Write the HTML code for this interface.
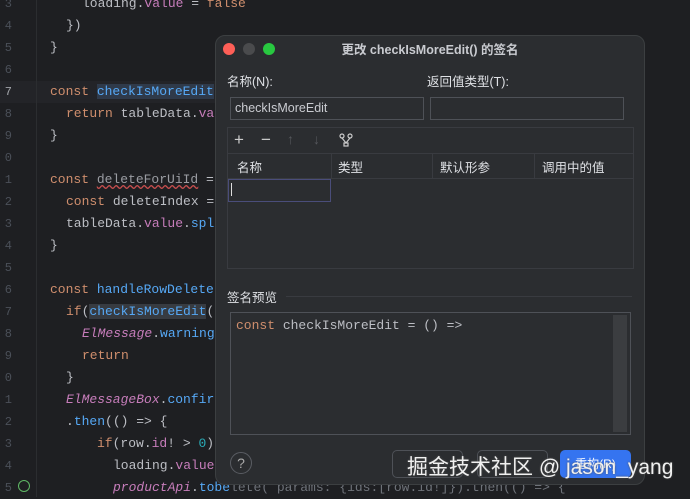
<!DOCTYPE html>
<html><head><meta charset="utf-8"><style>
body{margin:0;width:690px;height:497px;overflow:hidden;background:#1e1f22;position:relative;font-family:"Liberation Sans","Noto Sans CJK SC",sans-serif}
.code{position:absolute;left:0;top:0;font-family:"Liberation Mono",monospace;font-size:13px;color:#bcbec4;white-space:pre}
.ln{position:absolute;left:0;width:12px;color:#4b5059;font-size:12px;text-align:right;overflow:hidden}
.l{position:absolute;height:22px;line-height:22px;left:50px}
.k{color:#cf8e6d}.f{color:#56a8f5}.p{color:#c77dbb}.i{font-style:italic;color:#c77dbb}.n{color:#2aacb8}
.dlg{position:absolute;left:215px;top:35px;width:430px;height:450px;background:#2b2d30;border-radius:10px;border:1px solid #3c3f41;box-sizing:border-box;color:#dfe1e5;font-size:12.5px}
.a{position:absolute}
.inp{position:absolute;border:1px solid #4e5157;background:#2b2d30;box-sizing:border-box}
.btn{position:absolute;top:414px;height:28px;border:1px solid #4e5157;border-radius:5px;box-sizing:border-box}
</style></head><body>
<div style="position:absolute;left:0;top:81px;width:215px;height:22px;background:#232428"></div>
<div style="position:absolute;left:36px;top:0;width:1px;height:497px;background:#2b2d30"></div>
<div class="code">
<div class="l" style="top:-7px;left:82px">loading.<span class="p">value</span> = <span class="k">false</span></div>
<div class="l" style="top:15px;left:66px">})</div>
<div class="l" style="top:37px">}</div>
<div class="l" style="top:81px"><span class="k">const </span><span class="f" style="background:#2f3a4a">checkIsMoreEdit</span></div>
<div class="l" style="top:103px;left:66px"><span class="k">return </span>tableData.<span class="p">va</span></div>
<div class="l" style="top:125px">}</div>
<div class="l" style="top:169px"><span class="k">const </span><span style="text-decoration:underline wavy #c94f4f;color:#9a9ca2">deleteForUiId</span> =</div>
<div class="l" style="top:191px;left:66px"><span class="k">const </span>deleteIndex =</div>
<div class="l" style="top:213px;left:66px">tableData.<span class="p">value</span>.<span class="f">spl</span></div>
<div class="l" style="top:235px">}</div>
<div class="l" style="top:279px"><span class="k">const </span><span class="f">handleRowDelete</span></div>
<div class="l" style="top:301px;left:66px"><span class="k">if</span>(<span class="f" style="background:#373b41">checkIsMoreEdit</span>(</div>
<div class="l" style="top:323px;left:82px"><span class="i">ElMessage</span>.<span class="f">warning</span></div>
<div class="l" style="top:345px;left:82px"><span class="k">return</span></div>
<div class="l" style="top:367px;left:66px">}</div>
<div class="l" style="top:389px;left:66px"><span class="i">ElMessageBox</span>.<span class="f">confir</span></div>
<div class="l" style="top:411px;left:66px">.<span class="f">then</span>(() => {</div>
<div class="l" style="top:433px;left:97px"><span class="k">if</span>(row.<span class="p">id</span>! > <span class="n">0</span>)</div>
<div class="l" style="top:455px;left:113px">loading.<span class="p">value</span></div>
<div class="l" style="top:477px;left:113px"><span class="i">productApi</span>.<span class="f">tobe</span><span style="color:#6f737a">lete( params: {ids:[row.id!]}).then(() => {</span></div>
</div>
<div class="code" style="font-size:12px;color:#4b5059">
<div class="ln" style="top:-3px">3</div><div class="ln" style="top:19px">4</div><div class="ln" style="top:41px">5</div><div class="ln" style="top:63px">6</div><div class="ln" style="top:85px;color:#a0a3a8">7</div><div class="ln" style="top:107px">8</div><div class="ln" style="top:129px">9</div><div class="ln" style="top:151px">0</div><div class="ln" style="top:173px">1</div><div class="ln" style="top:195px">2</div><div class="ln" style="top:217px">3</div><div class="ln" style="top:239px">4</div><div class="ln" style="top:261px">5</div><div class="ln" style="top:283px">6</div><div class="ln" style="top:305px">7</div><div class="ln" style="top:327px">8</div><div class="ln" style="top:349px">9</div><div class="ln" style="top:371px">0</div><div class="ln" style="top:393px">1</div><div class="ln" style="top:415px">2</div><div class="ln" style="top:437px">3</div><div class="ln" style="top:459px">4</div><div class="ln" style="top:481px">5</div>
<div style="position:absolute;left:18px;top:480px;width:10px;height:10px;border:1px solid #5fb865;border-radius:50%"></div>
</div>
<div class="dlg">
<div class="a" style="left:7px;top:7px;width:12px;height:12px;border-radius:50%;background:#fe5f57"></div>
<div class="a" style="left:27px;top:7px;width:12px;height:12px;border-radius:50%;background:#4a4b4d"></div>
<div class="a" style="left:47px;top:7px;width:12px;height:12px;border-radius:50%;background:#28c840"></div>
<div class="a" style="left:0;right:0;top:3px;text-align:center;font-weight:bold;font-size:12.5px;color:#c9cbd0">更改 checkIsMoreEdit() 的签名</div>
<div class="a" style="left:11px;top:35px">名称(N):</div>
<div class="a" style="left:211px;top:35px">返回值类型(T):</div>
<div class="inp" style="left:14px;top:61px;width:194px;height:23px;padding:3px 4px;color:#c9cbd0">checkIsMoreEdit</div>
<div class="inp" style="left:214px;top:61px;width:194px;height:23px"></div>
<div class="inp" style="left:11px;top:91px;width:407px;height:142px;border-color:#393b40">
 <div class="a" style="left:0;right:0;top:25px;height:1px;background:#393b40"></div>
 <div class="a" style="left:0;right:0;top:50px;height:1px;background:#393b40"></div>
 <div class="a" style="left:103px;top:26px;width:1px;height:24px;background:#393b40"></div>
 <div class="a" style="left:204px;top:26px;width:1px;height:24px;background:#393b40"></div>
 <div class="a" style="left:306px;top:26px;width:1px;height:24px;background:#393b40"></div>
 <div class="a" style="left:6px;top:2px;font-size:17px;color:#ccc">+</div>
 <div class="a" style="left:33px;top:2px;font-size:17px;color:#ccc">−</div>
 <div class="a" style="left:59px;top:3px;font-size:14px;color:#55575c">↑</div>
 <div class="a" style="left:85px;top:3px;font-size:14px;color:#55575c">↓</div>
 <svg class="a" style="left:111px;top:5px" width="14" height="14"><g fill="none" stroke="#ccc" stroke-width="1.2"><circle cx="3" cy="3" r="2"/><circle cx="11" cy="3" r="2"/><rect x="5" y="10" width="4" height="3"/><path d="M3 5L7 10M11 5L7 10"/></g></svg>
 <div class="a" style="left:9px;top:29px">名称</div>
 <div class="a" style="left:110px;top:29px">类型</div>
 <div class="a" style="left:212px;top:29px">默认形参</div>
 <div class="a" style="left:314px;top:29px">调用中的值</div>
 <div class="a" style="left:0;top:51px;width:101px;height:21px;border:1px solid #4a4d7a"></div>
 <div class="a" style="left:3px;top:55px;width:1px;height:13px;background:#ddd"></div>
</div>
<div class="a" style="left:11px;top:251px">签名预览</div>
<div class="a" style="left:70px;right:12px;top:260px;height:1px;background:#393b40"></div>
<div class="inp" style="left:14px;top:276px;width:401px;height:123px;border-color:#4e5157;background:#2b2d30">
 <div class="a" style="left:5px;top:5px;font-family:'Liberation Mono',monospace;font-size:13px;color:#bcbec4;white-space:pre"><span class="k">const</span> checkIsMoreEdit = () =></div>
 <div class="a" style="left:382px;top:2px;width:14px;height:117px;background:#3b3d40"></div>
</div>
<div class="a" style="left:14px;top:416px;width:20px;height:20px;border:1px solid #5a5d63;border-radius:50%;text-align:center;line-height:20px;color:#aaa;font-size:14px">?</div>
<div class="btn" style="left:176px;width:71px"></div>
<div class="btn" style="left:261px;width:71px"></div>
<div class="btn" style="left:344px;width:71px;background:#3574f0;border-color:#3574f0;color:#fff;text-align:center;line-height:26px;font-size:12px">重构(R)</div>
</div>
<div class="a" style="left:407px;top:451px;font-size:21px;color:#f0f0f0;white-space:nowrap;text-shadow:0 0 2px #555">掘金技术社区 @ jason_yang</div>
</body></html>
